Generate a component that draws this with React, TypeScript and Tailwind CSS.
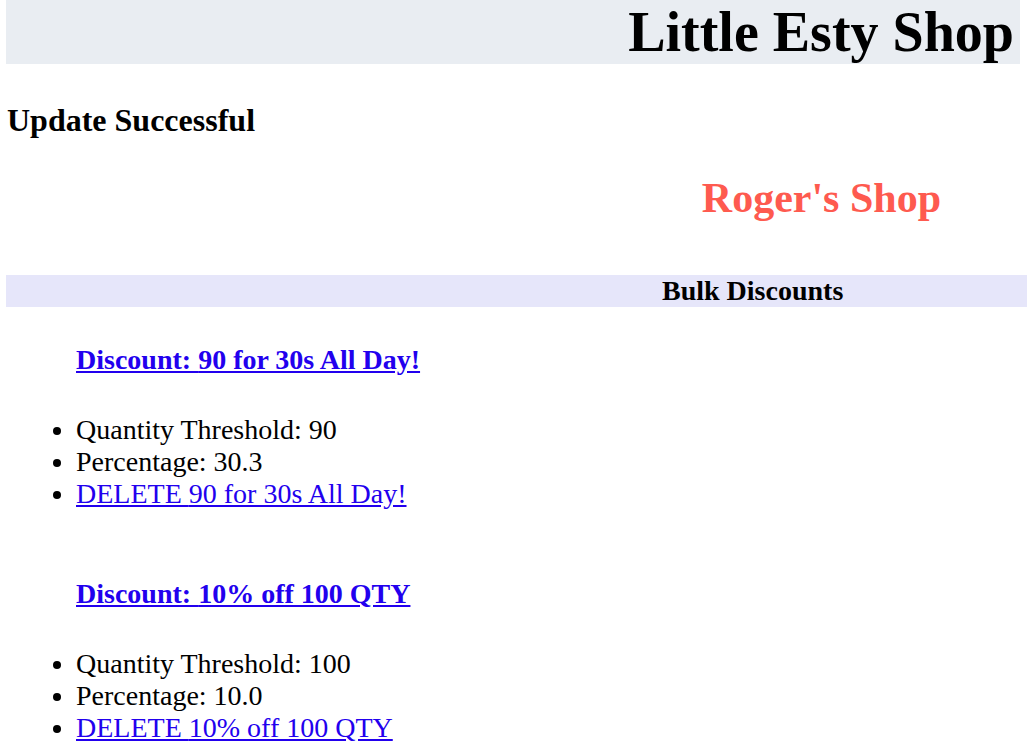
const discounts = [
  { name: '90 for 30s All Day!', threshold: 90, percentage: '30.3' },
  { name: '10% off 100 QTY', threshold: 100, percentage: '10.0' },
];

export default function App() {
  return (
    <div className="min-h-[744px] bg-white text-black" style={{ fontFamily: '"Liberation Serif", "Times New Roman", serif' }}>
      <header className="ml-[6px] mr-[7px] flex h-[64px] items-center justify-end bg-[#e9edf2] pr-[6px]">
        <h1 className="text-[56px] font-bold leading-none">Little Esty Shop</h1>
      </header>

      <h3 className="ml-[7px] mt-[40px] text-[32px] font-bold leading-[32px]">Update Successful</h3>

      <div className="mt-[42px] flex justify-end pr-[86px]">
        <h2 className="text-[42px] font-bold leading-[40px] text-[#fe5a4f]">Roger's Shop</h2>
      </div>

      <div className="ml-[6px] mt-[57px] flex h-[32px] items-center bg-[#e6e6fa] pl-[656px]">
        <h3 className="text-[28px] font-bold leading-none">Bulk Discounts</h3>
      </div>

      <section className="mt-[37px]">
        {discounts.map((d, i) => (
          <div key={d.name} className={i > 0 ? 'mt-[68px]' : ''}>
            <h3 className="ml-[76px] text-[28px] font-bold leading-[32px]">
              <a href="#" className="text-[#2200ee] underline">Discount: {d.name}</a>
            </h3>
            <ul className="mt-[38px] list-disc pl-[76px] text-[28px] leading-[32px]">
              <li>Quantity Threshold: {d.threshold}</li>
              <li>Percentage: {d.percentage}</li>
              <li>
                <a href="#" className="text-[#2200ee] underline">DELETE {d.name}</a>
              </li>
            </ul>
          </div>
        ))}
      </section>
    </div>
  );
}
